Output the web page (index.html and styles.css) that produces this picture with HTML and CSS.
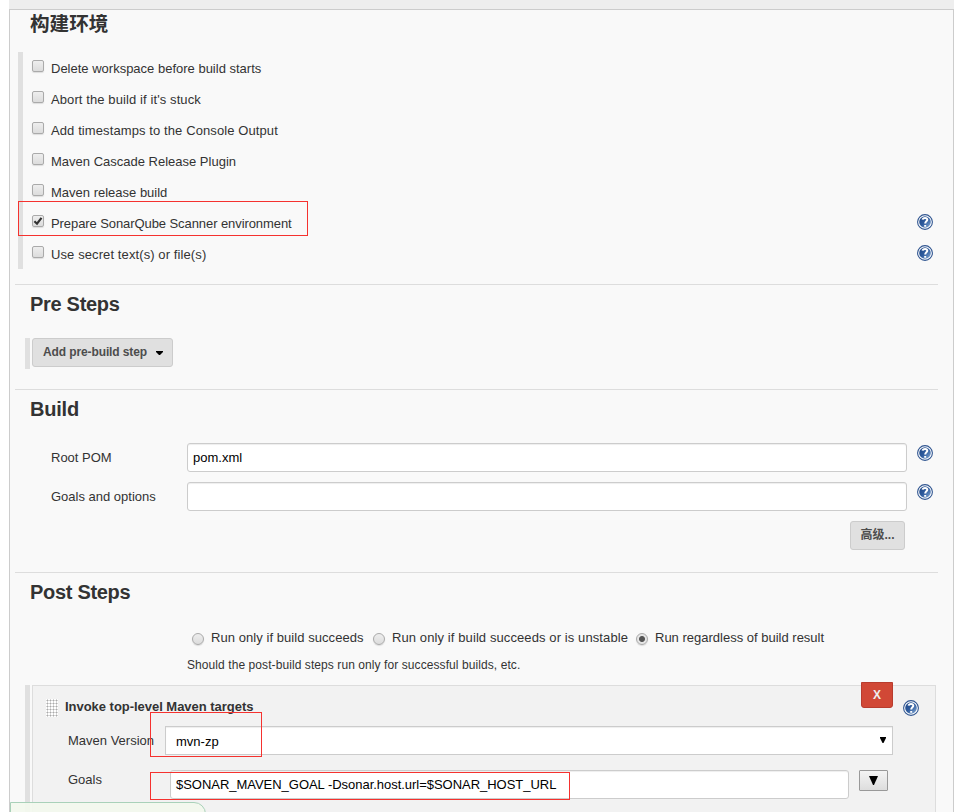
FILE: index.html
```html
<!DOCTYPE html>
<html lang="zh-CN">
<head>
<meta charset="utf-8">
<title>构建环境</title>
<link rel="stylesheet" href="styles.css">
</head>
<body>
<svg class="defs" width="0" height="0" aria-hidden="true">
  <defs>
    <linearGradient id="blue" x1="0" y1="0" x2="1" y2="1"><stop offset="0" stop-color="#1d4483"/><stop offset=".5" stop-color="#2f5c9e"/><stop offset="1" stop-color="#8db0d8"/></linearGradient>
    <symbol id="help" viewBox="0 0 16 16">
      <circle cx="8" cy="8" r="7.4" fill="#fff" stroke="#305590" stroke-width="1.1"/>
      <circle cx="8" cy="8" r="5.8" fill="url(#blue)"/>
      <path d="M5.6 5.6C5.9 3.4 10.3 3.2 10.3 5.8C10.3 7.4 8.2 7.4 8.2 9.5M8.2 10.9V12.7" fill="none" stroke="#fff" stroke-width="2"/>
    </symbol>
  </defs>
</svg>
<div class="topbar"></div>
<main class="panel">
  <section class="section env">
    <h2 class="title">构建环境</h2>
    <div class="options">
      <label class="option"><input class="check" type="checkbox"><span>Delete workspace before build starts</span></label>
      <label class="option loose"><input class="check" type="checkbox"><span>Abort the build if it's stuck</span></label>
      <label class="option loose"><input class="check" type="checkbox"><span>Add timestamps to the Console Output</span></label>
      <label class="option"><input class="check" type="checkbox"><span>Maven Cascade Release Plugin</span></label>
      <label class="option"><input class="check" type="checkbox"><span>Maven release build</span></label>
      <label class="option tight"><input class="check" type="checkbox" checked><span>Prepare SonarQube Scanner environment</span><svg class="help"><use href="#help"/></svg></label>
      <label class="option loose"><input class="check" type="checkbox"><span>Use secret text(s) or file(s)</span><svg class="help"><use href="#help"/></svg></label>
    </div>
  </section>
  <section class="section pre">
    <h2 class="title">Pre Steps</h2>
    <div class="step-list"><button class="btn add">Add pre-build step<svg class="caret" viewBox="0 0 7 4"><path d="M0 0H7V1L4 4H3L0 1Z"/></svg></button></div>
  </section>
  <section class="section build">
    <h2 class="title">Build</h2>
    <div class="fields">
      <div class="field"><span class="label">Root POM</span><div class="input">pom.xml</div><svg class="help"><use href="#help"/></svg></div>
      <div class="field"><span class="label">Goals and options</span><div class="input"></div><svg class="help"><use href="#help"/></svg></div>
    </div>
    <div class="actions"><button class="btn advanced">高级...</button></div>
  </section>
  <section class="section post">
    <h2 class="title">Post Steps</h2>
    <div class="radios">
      <label class="r1"><input class="radio" type="radio" name="run"><span>Run only if build succeeds</span></label>
      <label class="r2 loose"><input class="radio" type="radio" name="run"><span>Run only if build succeeds or is unstable</span></label>
      <label class="r3"><input class="radio" type="radio" name="run" checked><span>Run regardless of build result</span></label>
    </div>
    <p class="hint">Should the post-build steps run only for successful builds, etc.</p>
    <div class="chunks">
      <div class="chunk">
        <div class="chunk-head">
          <span class="grip"></span><b class="chunk-title">Invoke top-level Maven targets</b>
          <button class="delete">X</button><svg class="help"><use href="#help"/></svg>
        </div>
        <div class="row version"><span class="row-label">Maven Version</span><div class="select"><span>mvn-zp</span><svg class="arrow" viewBox="0 0 6 6"><path d="M0 0H6V1L3.5 6H2.5L0 1Z"/></svg></div></div>
        <div class="row goals"><span class="row-label">Goals</span><div class="input">$SONAR_MAVEN_GOAL -Dsonar.host.url=$SONAR_HOST_URL</div><button class="expand"><svg viewBox="0 0 9 9"><path d="M0 0H9L5 9H4Z"/></svg></button></div>
      </div>
    </div>
  </section>
</main>
<div class="mark mark-env"></div>
<div class="mark mark-version"></div>
<div class="mark mark-goals"></div>
<div class="savebar"></div>
</body>
</html>
```
FILE: styles.css
```css
* { box-sizing: border-box; }
body { margin: 0; height: 812px; overflow: hidden; position: relative; background: #fff; color: #333; font: 13px/16px "Liberation Sans", "Noto Sans CJK SC", sans-serif; }
.defs { position: absolute; }
.topbar { width: 945px; height: 10px; margin-left: 9px; background: #eee; border-bottom: 1px solid #ccc; }
.panel { margin-left: 9px; width: 945px; height: 802px; overflow: hidden; padding-left: 5px; background: #f9f9f9; border: solid #ccc; border-width: 0 1px; }
.section { width: 923px; border-top: 1px solid #ddd; }
.title { margin: 0; padding-left: 15px; font-size: 20px; line-height: 24px; font-weight: bold; letter-spacing: -.3px; }
.env { height: 274px; border-top: 0; }
.env .title { padding-top: 2px; height: 42px; font-size: 19.6px; letter-spacing: 0; }
.options { margin-left: 3px; border-left: 5px solid #e0e0e0; }
.option { display: flex; height: 31px; padding: 8px 5px 0 9px; }
.option span { margin: 1px 0 0 7px; }
.loose { letter-spacing: .1px; }
.tight { letter-spacing: -.08px; }
.option .help { margin-left: auto; margin-top: -1px; }
.help { display: block; flex: none; width: 16px; height: 16px; }
.check, .radio { appearance: none; margin: 0; flex: none; width: 12px; height: 12px; border: 1px solid #aaa; border-radius: 2px; background: linear-gradient(#eee, #dcdcdc); box-shadow: 0 1px 1px #ddd; }
.check:checked { background: url("data:image/svg+xml,%3Csvg xmlns='http://www.w3.org/2000/svg' viewBox='0 0 10 10'%3E%3Cpath d='M1.4 5.2L4 7.7L8.5 1.8' fill='none' stroke='%23333' stroke-width='2.2'/%3E%3C/svg%3E") center / 10px 10px, linear-gradient(#eee, #dcdcdc); }
.radio { border-radius: 50%; }
.radio:checked { background: radial-gradient(circle, #555 0 2.5px, #e6e6e6 3.5px); }
.pre { height: 105px; }
.pre .title, .build .title, .post .title { padding-top: 7px; }
.pre .title { height: 53px; }
.step-list { height: 31px; margin-left: 10px; border-left: 5px solid #e0e0e0; padding-left: 2px; }
.btn { height: 29px; border: 1px solid #ccc; border-radius: 3px; background: #e0e0e0; color: #4d4d4d; font: bold 12px/16px "Liberation Sans", "Noto Sans CJK SC", sans-serif; padding: 0 0 2px; }
.add { display: flex; align-items: center; width: 141px; padding-left: 10px; letter-spacing: -.11px; }
.caret { width: 7px; height: 4px; margin: 2px 0 0 9px; }
.build { height: 183px; }
.build .title { height: 53px; letter-spacing: -.2px; }
.fields { display: grid; gap: 10px; }
.field { display: flex; height: 29px; }
.label { width: 172px; padding: 7px 0 0 36px; }
.input { width: 720px; height: 29px; border: 1px solid #ccc; border-radius: 3px; background: #fff; box-shadow: inset 0 1px 1px #eee; color: #000; padding: 6px 5px 0; }
.field .help { margin: 2px 0 0 10px; }
.actions { display: flex; justify-content: flex-end; margin-top: 10px; padding-right: 33px; }
.advanced { width: 55px; }
.post .title { height: 56px; }
.radios { display: flex; padding-left: 177px; }
.radios label { display: flex; white-space: nowrap; }
.radio { margin-top: 4px; }
.radios span { margin: 1px 0 -1px 7px; }
.r1 { width: 181px; letter-spacing: .06px; }
.r2 { width: 263px; }
.hint { margin: 13px 0 0 172px; font-size: 12px; line-height: 14px; letter-spacing: .08px; }
.chunks { margin: 13px 0 0 10px; width: 911px; height: 140px; border-left: 5px solid #e0e0e0; padding-left: 2px; }
.chunk { height: 140px; border: 1px solid #ddd; background: #f2f2f2; }
.chunk-head { display: flex; height: 40px; padding-left: 13px; }
.grip { width: 12px; height: 18px; margin-top: 13px; background: radial-gradient(circle, #aaa 0 .8px, #fff 1.2px) 0 0 / 3px 3px; }
.chunk-title { width: 796px; padding: 13px 0 0 7px; letter-spacing: -.03px; }
.delete { width: 32px; height: 26px; margin: -4px 0 0 7px; border: 1px solid #b83c2e; border-radius: 0 0 3px 3px; background: #d14836; color: #eee; font: bold 12px "Liberation Sans", sans-serif; padding: 0; }
.chunk-head .help { margin: 14px 0 0 10px; }
.row { display: flex; height: 44px; padding-left: 35px; }
.row-label { flex: none; width: 97px; padding-top: 7px; }
.select { display: flex; justify-content: space-between; width: 728px; height: 29px; border: 1px solid #ccc; background: #fff; color: #000; padding: 7px 6px 0 10px; box-shadow: inset 0 1px 1px #eee; }
.arrow { width: 6px; height: 6px; margin-top: 3px; }
.goals .row-label { width: 102px; padding-top: 2px; }
.goals .input { width: 679px; letter-spacing: -.03px; }
.expand { display: flex; justify-content: center; width: 29px; height: 21px; margin-left: 10px; padding: 5px 0 0; border: 1px solid #999; border-radius: 1px; background: linear-gradient(#f4f4f4, #ddd); }
.expand svg { width: 9px; height: 9px; }
.mark { position: absolute; border: 1px solid #f5322f; }
.mark-env { left: 18px; top: 201px; width: 290px; height: 35px; }
.mark-version { left: 150px; top: 712px; width: 112px; height: 45px; }
.mark-goals { left: 150px; top: 772px; width: 420px; height: 28px; }
.savebar { position: absolute; left: 10px; top: 802px; width: 196px; height: 20px; border: 1px solid #a9d1b9; border-radius: 0 12px 0 0; background: rgba(243, 248, 238, .92); }
```
